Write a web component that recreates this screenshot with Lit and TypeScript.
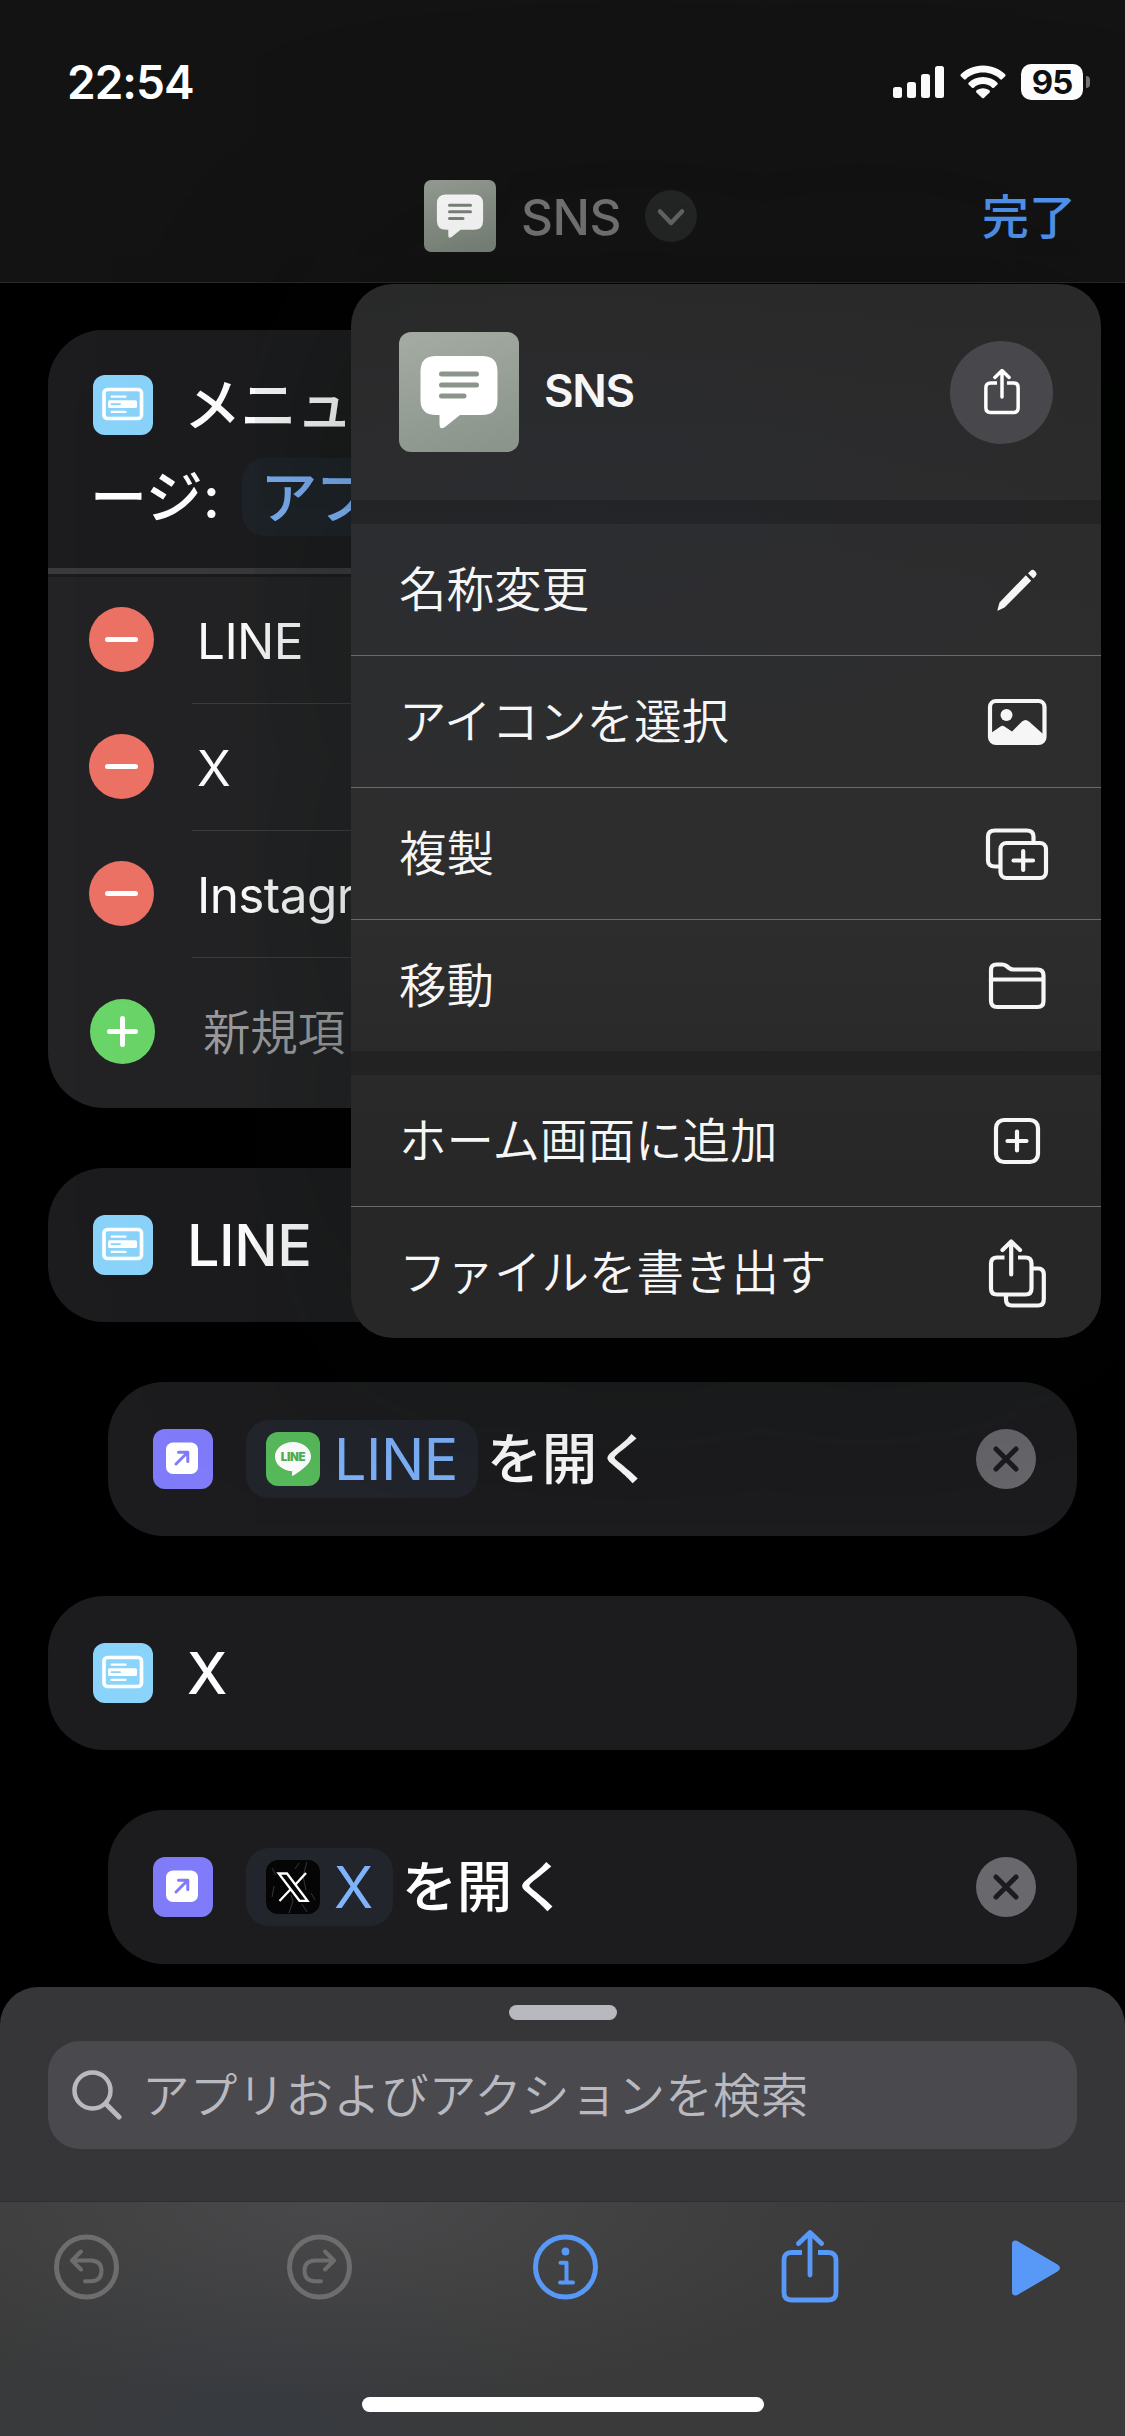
import { LitElement, html, svg, css, nothing } from "lit";
import { customElement, property } from "lit/decorators.js";

const font = css`"Inter", "Noto Sans CJK JP", sans-serif`;

/* ---------- icons ---------- */

const bubbleIcon = (cls: string, from: string, to: string, ink: string) => html`
  <svg class=${cls} viewBox="0 0 120 120">
    <defs>
      <linearGradient id="g" x1="0.3" y1="0" x2="0.6" y2="1">
        <stop offset="0" stop-color=${from}></stop>
        <stop offset="1" stop-color=${to}></stop>
      </linearGradient>
    </defs>
    <rect width="120" height="120" rx="12" fill="url(#g)"></rect>
    <path
      fill=${ink}
      d="M37 24H83Q98.500 24 98.500 39V68Q98.500 83 83 83H61L46 95Q40.500 98.500 40.500 92V83H37Q21.500 83 21.500 68V39Q21.500 24 37 24Z"
    ></path>
    <path d="M42.500 42H77.500M42.500 53H77.500M42.500 64H65" stroke=${to} stroke-width="5" stroke-linecap="round"></path>
  </svg>
`;

const shareGlyph = (cls: string, sw: number) => html`
  <svg class=${cls} viewBox="0 0 58 74" fill="none" stroke="currentColor" stroke-width=${sw} stroke-linecap="round" stroke-linejoin="round">
    <path stroke-linecap="butt" d="M21 22.500H10.500Q3 22.500 3 30V62.500Q3 70 10.500 70H47.500Q55 70 55 62.500V30Q55 22.500 47.500 22.500H37"></path>
    <path d="M29 45V3M17.500 13.500L29 2.500L40.500 13.500"></path>
  </svg>
`;

const menuIcons: Record<string, unknown> = {
  pencil: svg`
    <path fill="currentColor" stroke="none" d="M16.500 55.800L18.500 48.500L44.800 21.300L50.200 26.700L23.500 53.500L17.800 56.300Q16 57 16.500 55.800Z"/>
    <path fill="currentColor" stroke="none" d="M47 19.200L49.600 16.700Q51.600 15 53.600 16.700L54.800 17.900Q56.600 20 54.800 22L52.300 24.500Z"/>`,
  photo: svg`
    <rect x="9" y="15" width="54.500" height="42" rx="6"/>
    <circle cx="25.500" cy="29" r="6" fill="currentColor" stroke="none"/>
    <path fill="currentColor" stroke="none" d="M10 47L19.500 40.500Q21.500 39 23.500 40.500L31 45.500L41 35.500Q44.500 32.500 48 35.500L62 48V52Q62 57 57 57H15Q10 57 10 52Z"/>`,
  duplicate: svg`
    <rect x="19.500" y="25" width="45.500" height="35" rx="6"/>
    <path stroke-linecap="butt" d="M18.500 48.500H14Q7 48.500 7 42.500V18.500Q7 12.500 14 12.500H45.500Q52.500 12.500 52.500 18.500V24"/>
    <path d="M42.200 33V52M32.500 42.500H52"/>`,
  folder: svg`
    <path d="M10 20Q10 14.500 15.500 14.500H21Q23.500 14.500 25.500 16L28 18Q30 19.500 32.500 19.500H56.500Q62.500 19.500 62.500 25.500V51Q62.500 57 56.500 57H16Q10 57 10 51Z"/>
    <path d="M10 29.500H62"/>`,
  plusSquare: svg`
    <rect x="15" y="15" width="42" height="42" rx="8"/>
    <path d="M36 26.500V45.500M26.500 36H45.500"/>`,
  exportFiles: svg`
    <path stroke-linecap="butt" d="M23.500 20.500H16Q10 20.500 10 26.500V51.500Q10 57.500 16 57.500H44.500Q50.500 57.500 50.500 51.500V26.500Q50.500 20.500 44.500 20.500H37"/>
    <path d="M30.200 37.500V5M21.500 13L30.200 4.500L39 13"/>
    <path stroke-linecap="butt" d="M51 31.500H57Q62.800 31.500 62.800 37.500V62.500Q62.800 68.500 57 68.500H31Q25 68.500 25 62.500V58"/>`,
};

const chooseFromMenuIcon = html`
  <svg class="tile" viewBox="0 0 60 60">
    <rect width="60" height="60" rx="12" fill="#8ad4fb"></rect>
    <rect x="11" y="14.500" width="37.500" height="29" rx="3.500" fill="none" stroke="#fff" stroke-width="3.700"></rect>
    <path d="M18.500 21.700H32.500M18.500 36.900H32.500" stroke="#fff" stroke-width="2.200" stroke-linecap="round"></path>
    <rect x="15" y="25.300" width="29" height="7.800" rx="1.500" fill="#fff"></rect>
    <path d="M18.500 29.200H27" stroke="#8ad4fb" stroke-width="1.800" stroke-linecap="round"></path>
  </svg>
`;

const openAppIcon = html`
  <svg class="tile" viewBox="0 0 60 60">
    <rect width="60" height="60" rx="12" fill="#7f7bf9"></rect>
    <rect x="13" y="13.500" width="32" height="31.500" rx="7" fill="#fff"></rect>
    <path d="M23 35L34.500 23.500M25.500 23.200H34.800V32.500" fill="none" stroke="#7f7bf9" stroke-width="3" stroke-linecap="round" stroke-linejoin="round"></path>
  </svg>
`;

const lineAppIcon = html`
  <svg class="app" viewBox="0 0 54 54">
    <rect width="54" height="54" rx="12" fill="#57bb5b"></rect>
    <path fill="#fff" d="M27 10C37 10 45 16.500 45 24.500C45 31.500 38 36.500 27 43.800C25.600 44.300 25.900 42.500 26.200 39.200C16 38.500 9 32.500 9 24.500C9 16.500 17 10 27 10Z"></path>
    <text x="27" y="29" text-anchor="middle" font-size="11.500" font-weight="900" letter-spacing="-0.300" fill="#4db152" font-family="Inter, sans-serif">LINE</text>
  </svg>
`;

const xAppIcon = html`
  <svg class="app" viewBox="0 0 54 54">
    <rect width="54" height="54" rx="12" fill="#050505"></rect>
    <path d="M41 2L37 16L40 30M23 53L27 41L25 35M6 8L10 15M33 3L29 9M36 44L41 52M45 33L49 40M8 26L6 37" stroke="#4a4a4a" stroke-width="0.700" fill="none"></path>
    <path d="M12.700 13.500H21L41.500 40.800H33.500ZM40 13L28.800 25.300M24.600 29.300L13.500 41" fill="none" stroke="#fff" stroke-width="2.300"></path>
  </svg>
`;

/* ---------- status bar ---------- */

@customElement("status-bar")
class StatusBar extends LitElement {
  static styles = css`
    :host {
      display: flex;
      justify-content: space-between;
      align-items: center;
      height: 64px;
      padding: 50px 35px 0 67px;
      color: #fff;
      font-family: ${font};
    }
    .time { font-size: 46px; font-weight: 600; line-height: 64px; letter-spacing: -1px; }
    .right { display: flex; align-items: center; gap: 15px; }
    .bars { width: 52px; height: 34px; }
    .wifi { width: 46px; height: 34px; }
    .battery { display: flex; align-items: center; gap: 3px; }
    .level {
      width: 62px;
      height: 36px;
      border-radius: 10px;
      background: #fff;
      color: #111;
      font-size: 33px;
      font-weight: 700;
      line-height: 37px;
      text-align: center;
      letter-spacing: -1px;
    }
    .nub { width: 4px; height: 12px; border-radius: 0 5px 5px 0; background: #757575; }
  `;
  render() {
    return html`
      <div class="time">22:54</div>
      <div class="right">
        <svg class="bars" viewBox="0 0 52 34" fill="#fff">
          <rect x="0" y="22" width="9" height="11" rx="2.500"></rect>
          <rect x="14" y="17" width="9" height="16" rx="2.500"></rect>
          <rect x="28" y="9" width="9" height="24" rx="2.500"></rect>
          <rect x="42" y="1" width="9" height="32" rx="2.500"></rect>
        </svg>
        <svg class="wifi" viewBox="0 0 46 34" fill="#fff">
          <path d="M23 0.500C14 0.500 6 4 0.800 9.300Q0 10.300 0.800 11.200L4 14.300Q4.900 15 5.800 14.200C10.400 10 16.400 7.600 23 7.600S35.600 10 40.200 14.200Q41.100 15 42 14.300L45.200 11.200Q46 10.300 45.200 9.300C40 4 32 0.500 23 0.500Z"></path>
          <path d="M23 12C17.300 12 12.200 14.200 8.600 17.700Q7.800 18.600 8.600 19.500L12 22.700Q12.900 23.500 13.800 22.700C16.200 20.500 19.400 19.100 23 19.100S29.800 20.500 32.200 22.700Q33.100 23.500 34 22.700L37.400 19.500Q38.200 18.600 37.400 17.700C33.800 14.200 28.700 12 23 12Z"></path>
          <path d="M23 23.300C20.500 23.300 18.200 24.200 16.500 25.600Q15.500 26.500 16.400 27.400L22.100 32.900Q23 33.700 23.900 32.900L29.600 27.400Q30.500 26.500 29.500 25.600C27.800 24.200 25.500 23.300 23 23.300Z"></path>
        </svg>
        <div class="battery"><div class="level">95</div><div class="nub"></div></div>
      </div>
    `;
  }
}

/* ---------- action card ---------- */

@customElement("action-card")
class ActionCard extends LitElement {
  @property() kind: "case" | "open" = "case";
  @property() label = "";
  @property() app = "";

  static styles = css`
    :host { display: block; font-family: ${font}; }
    .card {
      display: flex;
      align-items: center;
      height: 154px;
      box-sizing: border-box;
      padding: 0 41px 0 45px;
      border-radius: 56px;
      background: #1c1c1e;
      color: #fff;
      font-size: 57.5px;
      font-weight: 500;
      line-height: 78px;
    }
    .open { margin-left: 60px; }
    .tile { width: 60px; height: 60px; flex: none; }
    .title { margin-left: 34px; letter-spacing: -0.5px; }
    .chip {
      display: flex;
      align-items: center;
      height: 78px;
      margin-left: 33px;
      padding: 0 20px 0 20px;
      border-radius: 23px;
      background: #22252c;
      color: #7fb3fb;
      font-weight: 400;
      letter-spacing: -0.5px;
    }
    .app { width: 54px; height: 54px; margin-right: 14px; }
    .suffix { margin-left: 9px; flex: 1; font-size: 55.5px; letter-spacing: -0.6px; }
    .close { width: 60px; height: 60px; }
  `;
  render() {
    if (this.kind === "case") {
      return html`<div class="card">${chooseFromMenuIcon}<span class="title">${this.label}</span></div>`;
    }
    return html`
      <div class="card open">
        ${openAppIcon}
        <span class="chip">${this.app === "line" ? lineAppIcon : xAppIcon}<span>${this.label}</span></span>
        <span class="suffix">を開く</span>
        <svg class="close" viewBox="0 0 60 60">
          <circle cx="30" cy="30" r="30" fill="#68686d"></circle>
          <path d="M20 20L40 40M40 20L20 40" stroke="#1c1c1e" stroke-width="5" stroke-linecap="round"></path>
        </svg>
      </div>
    `;
  }
}

/* ---------- choose-from-menu card ---------- */

@customElement("menu-card")
class MenuCard extends LitElement {
  static styles = css`
    :host {
      display: block;
      height: 778px;
      border-radius: 56px;
      overflow: hidden;
      background: #232325;
      font-family: ${font};
      color: #fff;
    }
    .head {
      height: 238px;
      box-sizing: border-box;
      padding: 36px 45px 0;
      background: #1c1c1e;
      font-size: 57px;
      font-weight: 500;
      white-space: nowrap;
    }
    .line { display: flex; align-items: center; height: 78px; line-height: 78px; }
    .line + .line { margin-top: 14px; }
    .tile { width: 60px; height: 60px; }
    .title { margin-left: 31px; padding-top: 1px; letter-spacing: -1px; }
    .prefix { margin-left: -3px; padding-top: 2px; }
    .chip {
      height: 77px;
      min-width: 260px;
      margin-left: 22px;
      padding: 1px 14px 0 18px;
      border-radius: 23px;
      background: #1e2329;
      color: #7fb3fb;
      font-weight: 500;
      letter-spacing: -1.2px;
    }
    .rule { height: 6px; background: #39393e; }
    .gap { height: 3px; background: #1b1b1d; }
    .row { display: flex; align-items: center; height: 126px; padding-left: 41px; font-size: 49.5px; line-height: 60px; }
    .row .name { margin-left: 43px; padding-top: 2px; letter-spacing: -0.6px; }
    .sep { height: 1px; margin-left: 144px; background: #3d3d3f; }
    .dot { width: 65px; height: 65px; flex: none; margin-bottom: 2px; }
    .new { height: 148px; padding-left: 42px; }
    .new .name { margin-left: 48px; color: #9d9d9f; font-size: 47.5px; font-weight: 350; letter-spacing: -0.2px; }
  `;
  render() {
    return html`
      <div class="head">
        <div class="line">${chooseFromMenuIcon}<span class="title">メニュ</span></div>
        <div class="line"><span class="prefix">ージ:</span><span class="chip">アプ</span></div>
      </div>
      <div class="rule"></div>
      <div class="gap"></div>
      ${["LINE", "X", "Instagr"].map(
        (name) => html`
          <div class="row">
            <svg class="dot" viewBox="0 0 65 65">
              <circle cx="32.500" cy="32.500" r="32.500" fill="#ed7266"></circle>
              <path d="M18.500 32.500H46.500" stroke="#fff" stroke-width="5" stroke-linecap="round"></path>
            </svg>
            <span class="name">${name}</span>
          </div>
          <div class="sep"></div>
        `,
      )}
      <div class="row new">
        <svg class="dot" viewBox="0 0 65 65">
          <circle cx="32.500" cy="32.500" r="32.500" fill="#6ad569"></circle>
          <path d="M19.500 32.500H45.500M32.500 19.500V45.500" stroke="#fff" stroke-width="5" stroke-linecap="round"></path>
        </svg>
        <span class="name">新規項</span>
      </div>
    `;
  }
}

/* ---------- context menu ---------- */

interface MenuItem {
  label: string;
  icon: string;
}

@customElement("context-menu")
class ContextMenu extends LitElement {
  static styles = css`
    :host {
      display: block;
      overflow: hidden;
      font-family: ${font};
      color: #f6f6f6;
      background:
        radial-gradient(ellipse 560px 280px at 30% 24%, rgba(44, 47, 55, 0.4), transparent),
        linear-gradient(#292929, #2d2d2e 35%, #2d2d2d 60%, #272727 85%, #272727);
    }
    .head { display: flex; align-items: center; height: 216px; box-sizing: border-box; padding: 0 48px; }
    .glyph { width: 120px; height: 120px; }
    .title { flex: 1; margin: 0 0 3px 25px; font-size: 45.5px; font-weight: 600; line-height: 60px; letter-spacing: -1.3px; }
    .round {
      display: flex;
      align-items: center;
      justify-content: center;
      width: 103px;
      height: 103px;
      border-radius: 50%;
      background: #48484c;
      color: #fff;
    }
    .share { width: 36px; height: 46px; margin-bottom: 1px; }
    .gap { height: 24px; background: rgba(0, 0, 0, 0.17); }
    .item {
      display: flex;
      align-items: center;
      justify-content: space-between;
      height: 131px;
      padding: 0 48px;
      font-size: 47.5px;
      font-weight: 350;
      line-height: 60px;
    }
    .label { padding-top: 1px; }
    .item + .item { border-top: 1px solid #6a6a6b; }
    .icon { width: 72px; height: 72px; overflow: visible; }
  `;
  private groups: MenuItem[][] = [
    [
      { label: "名称変更", icon: "pencil" },
      { label: "アイコンを選択", icon: "photo" },
      { label: "複製", icon: "duplicate" },
      { label: "移動", icon: "folder" },
    ],
    [
      { label: "ホーム画面に追加", icon: "plusSquare" },
      { label: "ファイルを書き出す", icon: "exportFiles" },
    ],
  ];
  render() {
    return html`
      <div class="head">
        ${bubbleIcon("glyph", "#a3aaa1", "#8b958b", "#fff")}
        <span class="title">SNS</span>
        <span class="round">${shareGlyph("share", 5.6)}</span>
      </div>
      ${this.groups.map(
        (group) => html`
          <div class="gap"></div>
          <div>
            ${group.map(
              (item) => html`
                <div class="item">
                  <span class="label">${item.label}</span>
                  <svg class="icon" viewBox="0 0 72 72" fill="none" stroke="currentColor" stroke-width="4.200" stroke-linecap="round" stroke-linejoin="round">
                    ${menuIcons[item.icon] ?? nothing}
                  </svg>
                </div>
              `,
            )}
          </div>
        `,
      )}
    `;
  }
}

/* ---------- bottom sheet ---------- */

@customElement("action-sheet")
class ActionSheet extends LitElement {
  static styles = css`
    :host {
      display: flex;
      flex-direction: column;
      height: 449px;
      border-radius: 38px 38px 0 0;
      overflow: hidden;
      background: #363638;
      font-family: ${font};
    }
    .top { height: 214px; padding: 18px 48px 0; box-sizing: border-box; }
    .grabber { width: 108px; height: 15px; margin: 0 auto; border-radius: 8px; background: #b8b9be; }
    .search {
      display: flex;
      align-items: center;
      height: 108px;
      margin-top: 21px;
      padding-left: 24px;
      border-radius: 32px;
      background: #4a494e;
      color: #b9b9c0;
      font-size: 47.700px;
      font-weight: 350;
      line-height: 60px;
    }
    .query { padding-top: 2px; letter-spacing: 0.1px; }
    .lens { width: 50px; height: 50px; margin-right: 20px; margin-bottom: 1px; }
    .bar {
      flex: 1;
      display: flex;
      flex-direction: column;
      justify-content: space-between;
      align-items: center;
      border-top: 1px solid #2f2f31;
      padding-bottom: 24px;
      background:
        radial-gradient(ellipse 560px 200px at 30% 0, #49494b, transparent),
        radial-gradient(ellipse 300px 200px at 22% 100%, #373a40, transparent),
        #3a3a3a;
    }
    .tools { display: flex; align-items: center; width: 100%; box-sizing: border-box; padding: 28px 0 0 54px; color: #5899f8; }
    .tool { width: 65px; height: 74px; }
    .dim { color: #6d6d6e; }
    .redo { margin-left: 168px; }
    .info { margin-left: 181px; }
    .share { width: 58px; height: 74px; margin-left: 183px; }
    .play { width: 48px; height: 56px; margin-left: 173px; margin-top: 1px; }
    .home { width: 402px; height: 15px; border-radius: 8px; background: #fff; }
  `;
  render() {
    const round = (cls: string, body: unknown) => html`
      <svg class=${cls} viewBox="0 -4.500 65 74" fill="none" stroke="currentColor" stroke-width="4" stroke-linecap="round" stroke-linejoin="round">
        <circle cx="32.500" cy="32.500" r="30" stroke-width="5"></circle>
        ${body}
      </svg>
    `;
    return html`
      <div class="top">
        <div class="grabber"></div>
        <div class="search">
          <svg class="lens" viewBox="0 0 50 50" fill="none" stroke="currentColor" stroke-linecap="round">
            <circle cx="20.500" cy="20.500" r="18" stroke-width="4.500"></circle>
            <path d="M34 34L47 47" stroke-width="5"></path>
          </svg>
          <span class="query">アプリおよびアクションを検索</span>
        </div>
      </div>
      <div class="bar">
        <div class="tools">
          ${round("tool dim", svg`<path d="M27 17L18 26L27 35M18.500 26H37Q47.500 26.500 47.500 36Q47.500 46.500 37 46.800H31"/>`)}
          ${round("tool dim redo", svg`<path d="M38 17L47 26L38 35M46.500 26H28Q17.500 26.500 17.500 36Q17.500 46.500 28 46.800H34"/>`)}
          ${round(
            "tool info",
            svg`<circle cx="32.500" cy="17" r="3.900" fill="currentColor" stroke="none"/><path d="M27.500 28.300H33.500V47.500M27 48H40"/>`,
          )}
          ${shareGlyph("share", 4.8)}
          <svg class="play" viewBox="0 0 48 56" fill="currentColor">
            <path d="M0 4Q0 0.500 3.500 0.500Q5 0.500 7 2L45.500 24.500Q48 26.200 48 28Q48 29.800 45.500 31.500L7 54Q5 55.500 3.500 55.500Q0 55.500 0 52Z"></path>
          </svg>
        </div>
        <div class="home"></div>
      </div>
    `;
  }
}

/* ---------- page ---------- */

@customElement("app-root")
class AppRoot extends LitElement {
  static styles = css`
    :host {
      position: relative;
      display: flex;
      flex-direction: column;
      width: 1125px;
      height: 2436px;
      overflow: hidden;
      background: #000;
      font-family: ${font};
    }
    .top { height: 282px; background: #131313; border-bottom: 1px solid #2a2a2a; }
    .nav {
      display: grid;
      grid-template-columns: 1fr auto 1fr;
      align-items: center;
      height: 72px;
      margin-top: 66px;
      padding: 0 49px 0 45px;
    }
    .name { display: flex; align-items: center; grid-column: 2; color: #777; font-size: 49.5px; font-weight: 500; line-height: 60px; }
    .nsns { padding-top: 1px; letter-spacing: -0.4px; }
    .glyph { width: 72px; height: 72px; margin-right: 25px; }
    .chev { width: 52px; height: 52px; margin-left: 24px; }
    .done { justify-self: end; padding-top: 1px; color: #5296f2; font-size: 47px; font-weight: 500; line-height: 60px; }
    .content { flex: 1; display: flex; flex-direction: column; gap: 60px; padding: 47px 48px 0; min-height: 0; overflow: hidden; }
    .menu {
      position: absolute;
      left: 351px;
      top: 284px;
      width: 750px;
      height: 1054px;
      border-radius: 42px;
      box-shadow: 0 0 260px rgba(4, 14, 2, 0.42);
    }
    .sheet { position: relative; }
  `;
  render() {
    return html`
      <div class="top">
        <status-bar></status-bar>
        <div class="nav">
          <div class="name">
            ${bubbleIcon("glyph", "#979f95", "#7d867c", "#fff")}
            <span class="nsns">SNS</span>
            <svg class="chev" viewBox="0 0 52 52">
              <circle cx="26" cy="26" r="26" fill="#252727"></circle>
              <path d="M15 21.500L26 33L37 21.500" fill="none" stroke="#68686a" stroke-width="4.500" stroke-linecap="round" stroke-linejoin="round"></path>
            </svg>
          </div>
          <span class="done">完了</span>
        </div>
      </div>
      <div class="content">
        <menu-card></menu-card>
        <action-card kind="case" label="LINE"></action-card>
        <action-card kind="open" label="LINE" app="line"></action-card>
        <action-card kind="case" label="X"></action-card>
        <action-card kind="open" label="X" app="x"></action-card>
      </div>
      <context-menu class="menu"></context-menu>
      <action-sheet class="sheet"></action-sheet>
    `;
  }
}
